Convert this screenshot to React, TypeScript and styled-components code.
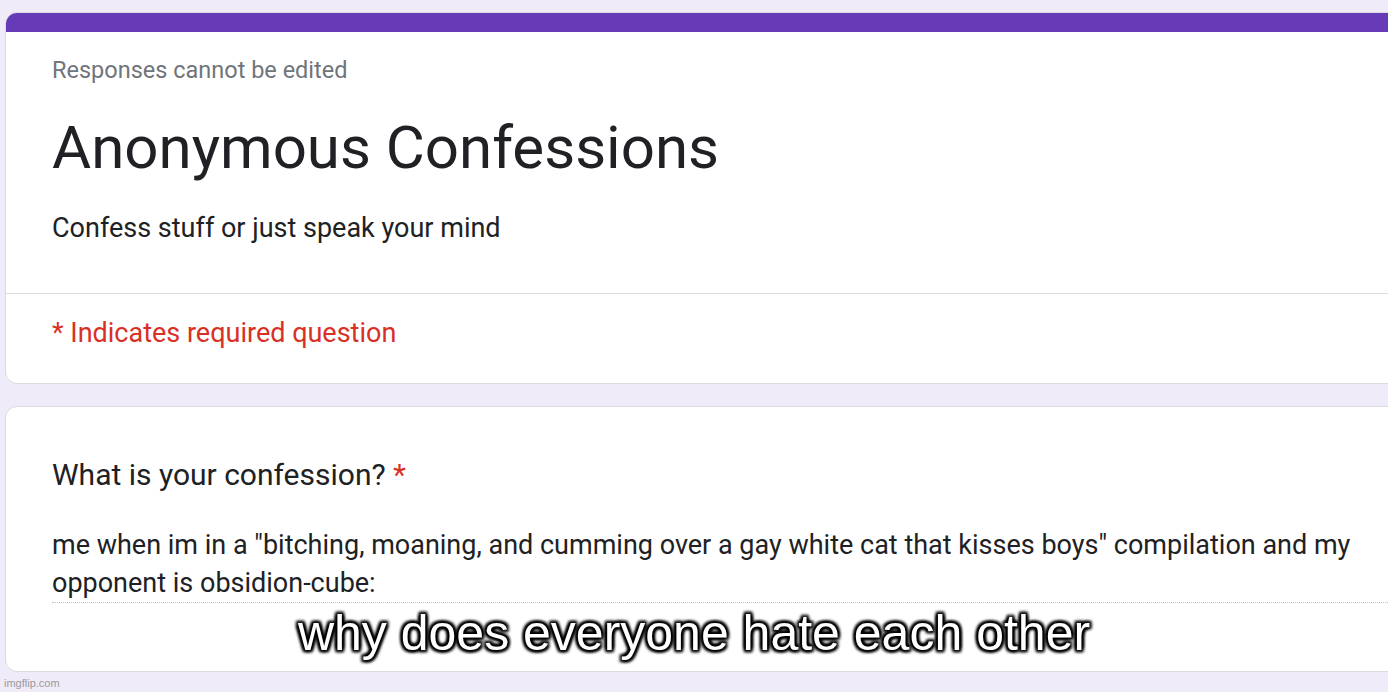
import styled, { createGlobalStyle } from "styled-components";

const GlobalStyle = createGlobalStyle`
  html, body {
    margin: 0;
    padding: 0;
    background: #f0ebf8;
    overflow: hidden;
  }
  body {
    font-family: Roboto, "Noto Sans", Arial, sans-serif;
  }
`;

const Page = styled.div`
  position: relative;
  width: 1388px;
  height: 692px;
  padding: 12px 0 0 5px;
  box-sizing: border-box;
  display: flex;
  flex-direction: column;
  gap: 22px;
`;

const Card = styled.section`
  width: 1440px;
  flex-shrink: 0;
  background: #fff;
  border: 1px solid #dadce0;
  border-radius: 12px;
  overflow: hidden;
  box-sizing: border-box;
`;

const Accent = styled.div`
  height: 19px;
  background: #673ab7;
`;

const Header = styled.div`
  padding: 24px 0 48px 46px;
  border-bottom: 1px solid #dadce0;
`;

const Note = styled.div`
  font-size: 23.5px;
  line-height: 28px;
  color: #70757a;
`;

const Title = styled.h1`
  margin: 29px 0 0;
  font-size: 60px;
  font-weight: 400;
  line-height: 70px;
  color: #202124;
`;

const Description = styled.div`
  margin-top: 28px;
  font-size: 27px;
  line-height: 34px;
  color: #202124;
`;

const Required = styled.div`
  padding: 22px 0 33px 46px;
  font-size: 27px;
  line-height: 34px;
  color: #d93025;
`;

const Question = styled.div`
  padding: 50px 0 68px 46px;
`;

const Label = styled.div`
  font-size: 30px;
  line-height: 36px;
  color: #202124;
`;

const Star = styled.span`
  color: #d93025;
`;

const Answer = styled.div`
  margin-top: 33px;
  width: 1360px;
  font-size: 27px;
  line-height: 38px;
  color: #202124;
  border-bottom: 1px dotted #bdc1c6;
`;

const Caption = styled.div`
  position: absolute;
  left: 0;
  right: 0;
  top: 607px;
  text-align: center;
  font-family: "Liberation Sans", Arial, sans-serif;
  font-size: 50px;
  font-weight: 400;
  line-height: 52px;
  color: #fff;
  text-shadow:
    0 0 4px #000,
    0 0 4px #000,
    0 0 4px #000,
    2px 2px 3px #000,
    -2px -2px 3px #000,
    2px -2px 3px #000,
    -2px 2px 3px #000;
`;

const Watermark = styled.div`
  position: absolute;
  left: 4px;
  bottom: 3px;
  font-family: "Liberation Sans", Arial, sans-serif;
  font-size: 11px;
  color: #9a9a9a;
`;

export default function App() {
  return (
    <>
      <GlobalStyle />
      <Page>
        <Card>
          <Accent />
          <Header>
            <Note>Responses cannot be edited</Note>
            <Title>Anonymous Confessions</Title>
            <Description>Confess stuff or just speak your mind</Description>
          </Header>
          <Required>* Indicates required question</Required>
        </Card>
        <Card>
          <Question>
            <Label>
              What is your confession? <Star>*</Star>
            </Label>
            <Answer>
              me when im in a "bitching, moaning, and cumming over a gay white
              cat that kisses boys" compilation and my opponent is
              obsidion-cube:
            </Answer>
          </Question>
        </Card>
        <Caption>why does everyone hate each other</Caption>
        <Watermark>imgflip.com</Watermark>
      </Page>
    </>
  );
}
